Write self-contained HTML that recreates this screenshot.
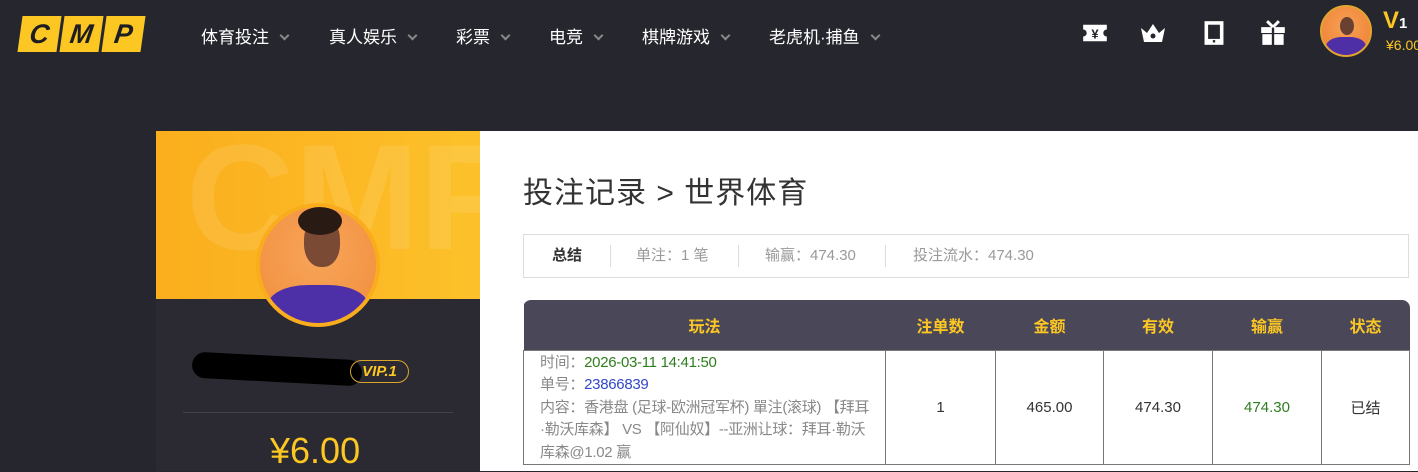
<!DOCTYPE html>
<html><head><meta charset="utf-8"><style>
*{margin:0;padding:0;box-sizing:border-box}
body{width:1418px;height:466px;overflow:hidden;background:#26262e;font-family:"Liberation Sans","Noto Sans CJK SC",sans-serif;position:relative}
.a{position:absolute}
.logo span{position:absolute;top:16px;width:39px;height:36px;background:#fcc623;transform:skewX(-8deg);color:#1d1d22;font:italic 900 27px/36px "Liberation Sans",sans-serif;text-align:center}
.nav{top:23px;color:#fff;font-size:17px;white-space:nowrap}
.nav i{display:inline-block;width:7px;height:7px;border-right:2px solid #888;border-bottom:2px solid #888;transform:rotate(45deg);margin-left:12px;vertical-align:4px}
.ic{top:20px;width:26px;height:26px}
table{border-collapse:collapse;font-size:15px}
th{background:#4a4858;color:#fcc623;height:50px;font-weight:bold;font-size:16px}
td{border:1px solid #777;text-align:center;color:#333}
</style></head><body>
<div class="logo"><span style="left:20px">C</span><span style="left:62px">M</span><span style="left:104px">P</span></div>
<div class="a nav" style="left:201px">体育投注<i></i></div>
<div class="a nav" style="left:329px">真人娱乐<i></i></div>
<div class="a nav" style="left:456px">彩票<i></i></div>
<div class="a nav" style="left:549px">电竞<i></i></div>
<div class="a nav" style="left:642px">棋牌游戏<i></i></div>
<div class="a nav" style="left:769px">老虎机·捕鱼<i></i></div>
<svg class="a ic" style="left:1082px" viewBox="0 0 22 22"><path d="M1 4h20v4a3 3 0 0 0 0 6v4H1v-4a3 3 0 0 0 0-6z" fill="#fff"/><text x="11" y="15.5" font-size="11" text-anchor="middle" fill="#26262e" font-weight="bold">¥</text></svg>
<svg class="a ic" style="left:1140px" viewBox="0 0 26 22"><path d="M1 6l6 5 6-9 6 9 6-5-3 14H4z" fill="#fff"/><circle cx="13" cy="14" r="2.5" fill="#26262e"/></svg>
<svg class="a ic" style="left:1201px" viewBox="0 0 22 22"><rect x="3" y="1" width="16" height="20" fill="#fff"/><rect x="6" y="4" width="10" height="12" fill="#26262e"/><rect x="10" y="17" width="2" height="2" fill="#26262e"/></svg>
<svg class="a ic" style="left:1260px" viewBox="0 0 22 22"><path d="M1 6h20v5H1zM2 12h18v9H2z" fill="#fff"/><path d="M10 5v17h2V5z" fill="#26262e"/><path d="M11 6L6 1M11 6l5-5" stroke="#fff" stroke-width="2.5"/></svg>
<div class="a" style="left:1320px;top:5px;width:52px;height:52px;border-radius:50%;background:radial-gradient(circle at 50% 40%,#f6a156,#ee7d2f);border:2px solid #e2a531;overflow:hidden"><div class="a" style="left:18px;top:10px;width:14px;height:18px;border-radius:50%;background:#6a4030"></div><div class="a" style="left:4px;top:30px;width:40px;height:24px;border-radius:40% 40% 0 0;background:#4f2fa6"></div></div>
<div class="a" style="left:1383px;top:7px;color:#fcc623;font:bold 24px 'Liberation Sans'">V<span style="color:#fff;font-size:15px">1</span></div>
<div class="a" style="left:1386px;top:37px;color:#fcc623;font-size:14px">¥6.00</div>

<div class="a" style="left:156px;top:131px;width:324px;height:340px;background:#2b2a32"></div>
<div class="a" style="left:156px;top:131px;width:324px;height:168px;background:linear-gradient(90deg,#fbae1d,#fcc12a);overflow:hidden"><div class="a" style="left:30px;top:-20px;font:bold 150px 'Liberation Sans';color:rgba(255,255,255,0.1)">CMP</div></div>
<div class="a" style="left:256px;top:203px;width:124px;height:124px;border-radius:50%;background:radial-gradient(circle at 50% 40%,#f8a55a,#f08c3a);border:4px solid #f9ad1d;overflow:hidden"><div class="a" style="left:44px;top:10px;width:36px;height:50px;border-radius:45%;background:#7a4a34"></div><div class="a" style="left:38px;top:0px;width:44px;height:28px;border-radius:50%;background:#2a1a14"></div><div class="a" style="left:8px;top:78px;width:100px;height:50px;border-radius:40% 40% 0 0;background:#4d30a8"></div></div>
<div class="a" style="left:192px;top:356px;width:170px;height:26px;border-radius:13px;background:#000;transform:rotate(3deg)"></div>
<div class="a" style="left:350px;top:360px;width:59px;height:23px;border:1px solid #d9a52a;border-radius:12px;color:#fcc623;font:italic bold 15px/21px 'Liberation Sans';text-align:center">VIP.1</div>
<div class="a" style="left:183px;top:412px;width:270px;height:1px;background:#44434b"></div>
<div class="a" style="left:270px;top:430px;color:#fcc623;font-size:36px">¥6.00</div>

<div class="a" style="left:480px;top:131px;width:938px;height:340px;background:#fff"></div>
<div class="a" style="left:523px;top:168px;font-size:30px;letter-spacing:1px;color:#333">投注记录 &gt; 世界体育</div>
<div class="a" style="left:523px;top:234px;width:886px;height:44px;border:1px solid #ddd;font-size:15px;color:#999;line-height:42px">
<span class="a" style="left:28px;color:#333;font-weight:bold">总结</span><span class="a" style="left:86px;top:10px;height:22px;width:1px;background:#ddd"></span>
<span class="a" style="left:112px">单注：1 笔</span><span class="a" style="left:214px;top:10px;height:22px;width:1px;background:#ddd"></span>
<span class="a" style="left:241px">输赢：474.30</span><span class="a" style="left:361px;top:10px;height:22px;width:1px;background:#ddd"></span>
<span class="a" style="left:389px">投注流水：474.30</span></div>
<div class="a" style="left:523px;top:300px;width:887px;border-radius:8px 8px 0 0;overflow:hidden">
<table style="width:887px"><tr><th style="width:362px">玩法</th><th style="width:110px">注单数</th><th style="width:108px">金额</th><th style="width:109px">有效</th><th style="width:109px">输赢</th><th>状态</th></tr>
<tr style="height:114px"><td style="text-align:left;padding:1px 0 0 16px;color:#888;line-height:22.5px;vertical-align:top;letter-spacing:-0.3px">时间：<span style="color:#2e7d1e">2026-03-11 14:41:50</span><br>单号：<span style="color:#3548c8">23866839</span><br>内容：香港盘 (足球-欧洲冠军杯) 單注(滚球) 【拜耳<br>·勒沃库森】 VS 【阿仙奴】--亚洲让球：拜耳·勒沃<br>库森@1.02 赢</td><td>1</td><td>465.00</td><td>474.30</td><td style="color:#2e7d1e">474.30</td><td>已结</td></tr></table></div>
</body></html>
